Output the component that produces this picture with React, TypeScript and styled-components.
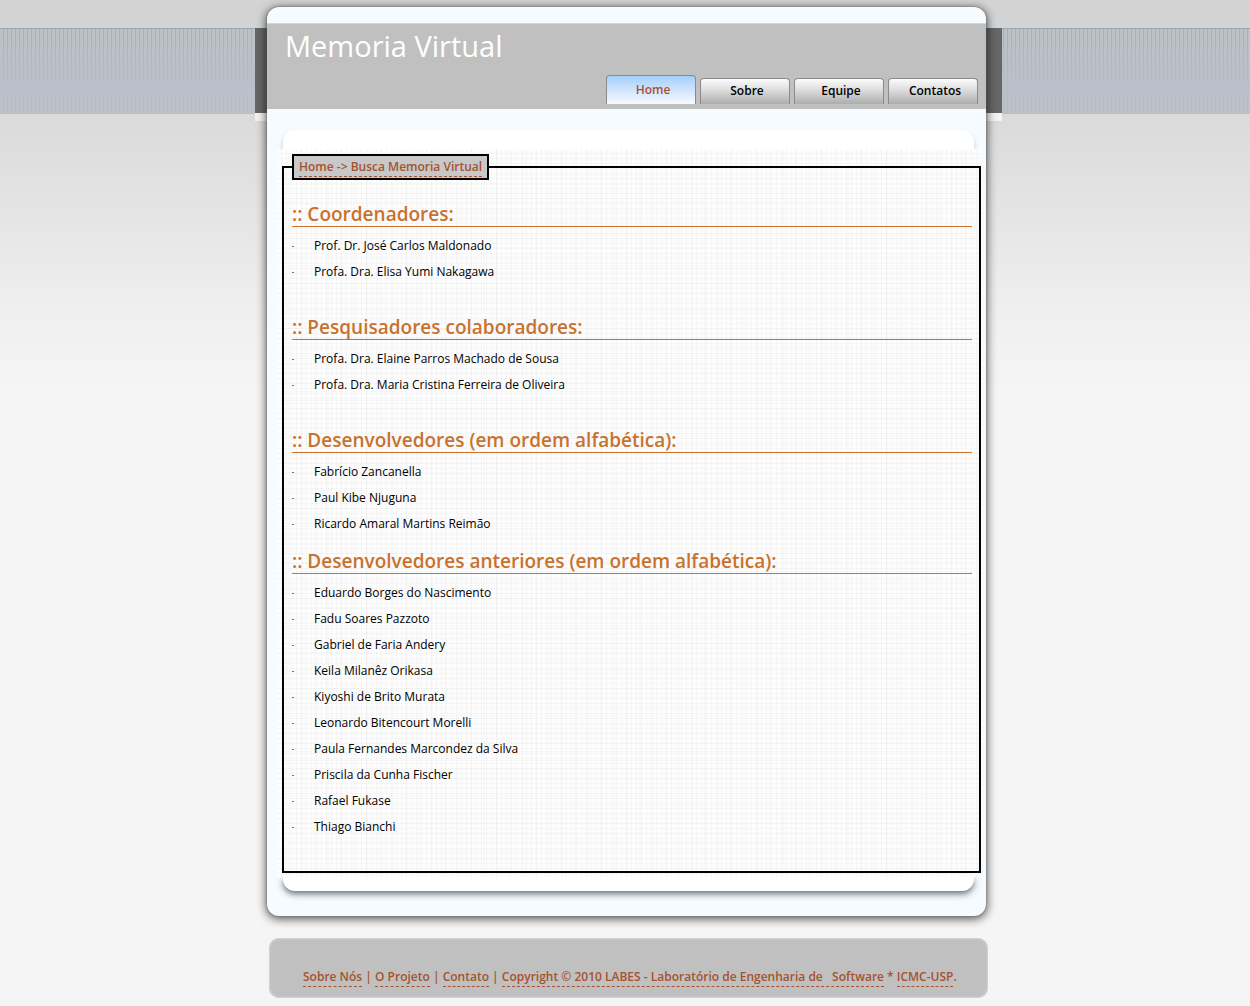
import React from "react";
import styled, { createGlobalStyle } from "styled-components";

const GlobalStyle = createGlobalStyle`
  *, *::before, *::after { box-sizing: border-box; }
  body {
    margin: 0;
    background: #f5f5f5;
    color: #000;
    font: 12px/24px "Trebuchet MS", "Open Sans", sans-serif;
  }
`;

const rust = "#a5532f";
const orange = "#c8722e";
const silver = "#c0c0c0";

const Page = styled.div`
  position: relative;
  isolation: isolate;
  min-height: 100vh;
  padding: 7px 0 8px 3px;
  background:
    linear-gradient(#9aa7b1, #9aa7b1) 0 28px / 100% 1px no-repeat,
    linear-gradient(rgba(188, 194, 198, 0) 0, rgba(186, 192, 202, 0.9) 58px, rgba(188, 194, 198, 0.6) 85px) 0 29px / 100% 85px no-repeat,
    repeating-linear-gradient(90deg, #bcc2c6 0 3px, #a7afb5 3px 4px) 0 29px / 100% 85px no-repeat,
    linear-gradient(#d3d3d3 0, #d3d3d3 20px, #d0d5d8 28px, #dadada 114px, #e3e3e3 200px, #efefef 310px, #f5f5f5 390px, #f5f5f5 100%);
`;

const Shell = styled.div`
  max-width: 719px;
  margin: 0 auto;
  padding: 16px 0 25px;
  border-radius: 12px;
  background: #f5fbff;
  box-shadow: 0 0 2px #6b6b70, 0 2px 10px 1px rgba(0, 0, 0, 0.65);

  /* dark wings that fold behind the panel at the height of the banner */
  &::before {
    content: "";
    position: absolute;
    z-index: -1;
    top: 28px;
    left: 50%;
    width: 747px;
    height: 93px;
    margin-left: -370px;
    background: linear-gradient(#666 0 85px, #f3f3f3 85px);
  }
`;

const Banner = styled.header`
  display: flex;
  flex-direction: column;
  justify-content: space-between;
  height: 86px;
  padding: 3px 8px 5px 18px;
  border-top: 1px solid #d3d6d8;
  background: ${silver};
`;

const SiteTitle = styled.h1`
  margin: 0;
  color: #fff;
  font-size: 29px;
  font-weight: 400;
  line-height: 38px;
`;

const Tabs = styled.nav`
  display: flex;
  align-items: flex-end;
  justify-content: flex-end;
  gap: 4px;
`;

const Tab = styled.a<{ $active?: boolean }>`
  width: 90px;
  height: ${(p) => (p.$active ? 29 : 26)}px;
  padding-left: 4px;
  border: 1px solid #8a8a8a;
  border-bottom: 0;
  border-radius: 4px 4px 0 0;
  background: ${(p) =>
    p.$active
      ? "linear-gradient(#a3cffc, #d0e4fb 50%, #f8faff)"
      : "linear-gradient(#fcfcfc, #dcdcdc 45%, #adadad)"};
  color: ${(p) => (p.$active ? rust : "#000")};
  font-weight: 600;
  line-height: ${(p) => (p.$active ? 28 : 24)}px;
  text-align: center;
  text-decoration: none;
`;

const Sheet = styled.main`
  margin: 21px 5px 0 10px;
`;

const Cap = styled.div<{ $foot?: boolean }>`
  height: ${(p) => (p.$foot ? 14 : 19)}px;
  margin: 0 7px 0 6px;
  border-radius: ${(p) => (p.$foot ? "0 0 12px 12px" : "12px 12px 0 0")};
  background: #fff;
  box-shadow: ${(p) =>
    p.$foot
      ? "0 3px 6px rgba(60, 70, 75, 0.75)"
      : "0 4px 5px rgba(80, 90, 100, 0.3)"};
`;

const Canvas = styled.div`
  position: relative;
  padding: 5px 0 4px 5px;
  background:
    repeating-linear-gradient(90deg, transparent 0 4px, rgba(90, 90, 90, 0.04) 4px 5px),
    repeating-linear-gradient(transparent 0 4px, rgba(90, 90, 90, 0.04) 4px 5px),
    repeating-linear-gradient(90deg, transparent 0 11px, rgba(90, 90, 90, 0.02) 11px 13px),
    repeating-linear-gradient(transparent 0 8px, rgba(90, 90, 90, 0.02) 8px 9px),
    #fdfdfd;
`;

const Frame = styled.fieldset`
  min-width: 0;
  margin: 0;
  padding: 9px 7px 14px 8px;
  border: 2px solid #000;
`;

const Trail = styled.legend`
  height: 26px;
  padding: 1px 5px;
  border: 2px solid #000;
  background: #c8c8c8;
  line-height: 20px;
`;

const RustLink = styled.a`
  display: inline-block;
  height: 20px;
  border-bottom: 1px dashed ${rust};
  color: ${rust};
  font-weight: 600;
  line-height: 20px;
  text-decoration: none;
`;

const Group = styled.section<{ $loose?: boolean }>`
  padding: 13px 0 ${(p) => (p.$loose ? 18 : 0)}px;
`;

const GroupTitle = styled.h2`
  height: 25px;
  margin: 0 0 5px;
  border-bottom: 1px solid ${orange};
  color: ${orange};
  font-size: 19px;
  font-weight: 600;
  line-height: 24px;
`;

const People = styled.ul`
  margin: 0;
  padding: 0;
  list-style: none;
`;

const Person = styled.li`
  display: flex;
  align-items: center;
  gap: 20px;
  padding-top: 2px;

  &::before {
    content: "";
    width: 2px;
    height: 1px;
    background: #777;
  }
`;

const Footer = styled.footer`
  max-width: 719px;
  margin: 22px auto 0;
  padding: 29px 34px 11px 34px;
  border-radius: 10px;
  background: ${silver};
  box-shadow: inset 0 0 2px 1px #d4d4d4;
  color: ${rust};
  font-weight: 600;
  line-height: 20px;
  white-space: pre;
`;

const FooterOffset = styled.div`
  padding-left: 4px;
`;

const tabs = ["Home", "Sobre", "Equipe", "Contatos"];

const groups = [
  {
    title: "Coordenadores:",
    loose: true,
    people: ["Prof. Dr. José Carlos Maldonado", "Profa. Dra. Elisa Yumi Nakagawa"],
  },
  {
    title: "Pesquisadores colaboradores:",
    loose: true,
    people: [
      "Profa. Dra. Elaine Parros Machado de Sousa",
      "Profa. Dra. Maria Cristina Ferreira de Oliveira",
    ],
  },
  {
    title: "Desenvolvedores (em ordem alfabética):",
    loose: false,
    people: ["Fabrício Zancanella", "Paul Kibe Njuguna", "Ricardo Amaral Martins Reimão"],
  },
  {
    title: "Desenvolvedores anteriores (em ordem alfabética):",
    loose: true,
    people: [
      "Eduardo Borges do Nascimento",
      "Fadu Soares Pazzoto",
      "Gabriel de Faria Andery",
      "Keila Milanêz Orikasa",
      "Kiyoshi de Brito Murata",
      "Leonardo Bitencourt Morelli",
      "Paula Fernandes Marcondez da Silva",
      "Priscila da Cunha Fischer",
      "Rafael Fukase",
      "Thiago Bianchi",
    ],
  },
];

export default function App() {
  return (
    <>
      <GlobalStyle />
      <Page>
        <Shell>
          <Banner>
            <SiteTitle>Memoria Virtual</SiteTitle>
            <Tabs>
              {tabs.map((name, i) => (
                <Tab key={name} href="#" $active={i === 0}>
                  {name}
                </Tab>
              ))}
            </Tabs>
          </Banner>
          <Sheet>
            <Cap />
            <Canvas>
              <Frame>
                <Trail>
                  <RustLink href="#">Home -&gt; Busca Memoria Virtual</RustLink>
                </Trail>
                {groups.map((g) => (
                  <Group key={g.title} $loose={g.loose}>
                    <GroupTitle>:: {g.title}</GroupTitle>
                    <People>
                      {g.people.map((p) => (
                        <Person key={p}>{p}</Person>
                      ))}
                    </People>
                  </Group>
                ))}
              </Frame>
            </Canvas>
            <Cap $foot />
          </Sheet>
        </Shell>
        <FooterOffset>
          <Footer>
            <RustLink href="#">Sobre Nós</RustLink>
            {" | "}
            <RustLink href="#">O Projeto</RustLink>
            {" | "}
            <RustLink href="#">Contato</RustLink>
            {" | "}
            <RustLink href="#">
              {"Copyright © 2010 LABES - Laboratório de Engenharia de   Software"}
            </RustLink>
            {" * "}
            <RustLink href="#">ICMC-USP</RustLink>.
          </Footer>
        </FooterOffset>
      </Page>
    </>
  );
}
